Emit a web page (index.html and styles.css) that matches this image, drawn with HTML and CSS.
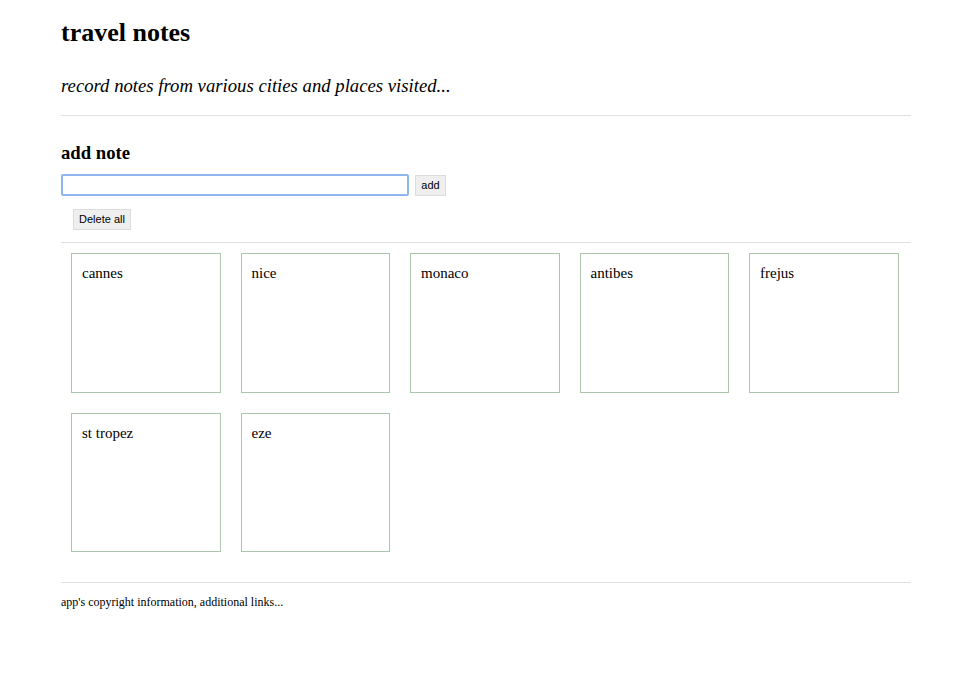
FILE: index.html
```html
<!DOCTYPE html>
<html>
<head>
<meta charset="utf-8">
<link rel="stylesheet" href="styles.css">
</head>
<body>
<div class="page">
  <header class="header">
    <h1 class="title">travel notes</h1>
    <p class="subtitle">record notes from various cities and places visited...</p>
  </header>
  <hr class="rule rule-header">
  <section class="add">
    <h3 class="add-title">add note</h3>
    <div class="add-row">
      <input class="note-input" type="text">
      <button class="btn btn-add">add</button>
    </div>
    <div class="delete-row">
      <button class="btn btn-delete">Delete all</button>
    </div>
  </section>
  <hr class="rule rule-notes">
  <section class="notes">
    <div class="note">cannes</div>
    <div class="note">nice</div>
    <div class="note">monaco</div>
    <div class="note">antibes</div>
    <div class="note">frejus</div>
    <div class="note">st tropez</div>
    <div class="note">eze</div>
  </section>
  <hr class="rule rule-footer">
  <footer class="footer">app's copyright information, additional links...</footer>
</div>
</body>
</html>
```
FILE: styles.css
```css
html, body {
  margin: 0;
  padding: 0;
  background: #fff;
}
body {
  font-family: "Liberation Serif", "Times New Roman", serif;
  color: #000;
}
.page {
  width: 850px;
  margin-left: 61px;
  padding-top: 18px;
  display: flex;
  flex-direction: column;
}
.header {
  display: flex;
  flex-direction: column;
}
.title {
  margin: 0;
  font-size: 26px;
  line-height: 30px;
  font-weight: bold;
}
.subtitle {
  margin: 27px 0 0 0;
  font-size: 18.72px;
  line-height: 22px;
  font-style: italic;
}
.rule {
  border: 0;
  height: 1px;
  background: #e0e0e0;
  margin: 0;
  width: 100%;
}
.rule-header {
  margin-top: 18px;
}
.add {
  display: flex;
  flex-direction: column;
}
.add-title {
  margin: 26px 0 0 0;
  font-size: 18.72px;
  line-height: 22px;
  font-weight: bold;
}
.add-row {
  display: flex;
  align-items: center;
  margin-top: 10px;
  gap: 6px;
}
.note-input {
  box-sizing: border-box;
  width: 348px;
  height: 22px;
  margin: 0;
  padding: 1px 4px;
  border: 2px solid #8db6ee;
  border-radius: 2px;
  outline: none;
  background: #fff;
  font-size: 13px;
}
.btn {
  box-sizing: border-box;
  margin: 0;
  height: 21px;
  padding: 0 6px;
  background: #efefef;
  border: 1px solid #dcdcdc;
  border-radius: 0;
  font-family: "Liberation Sans", Arial, sans-serif;
  font-size: 11px;
  color: #000;
  line-height: 19px;
}
.btn-add {
  width: 31px;
  padding: 0;
}
.delete-row {
  display: flex;
  margin-top: 13px;
  padding-left: 12px;
}
.btn-delete {
  width: 58px;
  padding: 0;
}
.rule-notes {
  margin-top: 12px;
}
.notes {
  display: flex;
  flex-wrap: wrap;
  gap: 20px 20px;
  padding: 10px 0 0 10px;
}
.note {
  box-sizing: border-box;
  width: 149.5px;
  height: 139.5px;
  border: 1px solid #adc4ad;
  padding: 11px 10px 10px 10px;
  font-size: 15px;
  line-height: 17px;
}
.rule-footer {
  margin-top: 30px;
}
.footer {
  margin-top: 12px;
  font-size: 12px;
  line-height: 15px;
}
```
